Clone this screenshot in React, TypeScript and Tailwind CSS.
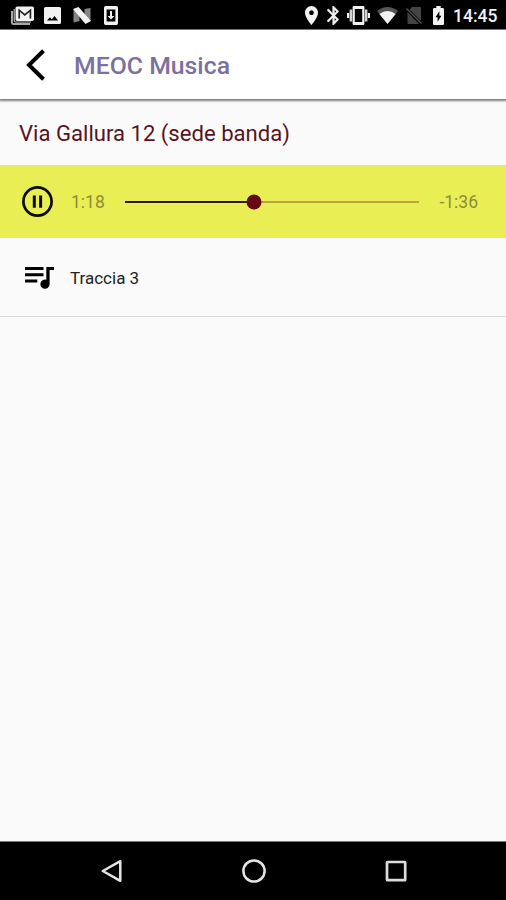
import type { ReactNode } from "react";

const elapsed = 78;
const remaining = 96;

const tracks = [{ id: 3, name: "Traccia 3" }];

function formatTime(seconds: number) {
  return `${Math.floor(seconds / 60)}:${String(seconds % 60).padStart(2, "0")}`;
}

function StatusIcon({
  className,
  viewBox,
  children,
}: {
  className: string;
  viewBox: string;
  children: ReactNode;
}) {
  return (
    <svg
      className={`shrink-0 ${className}`}
      viewBox={viewBox}
      preserveAspectRatio="none"
      fill="currentColor"
    >
      {children}
    </svg>
  );
}

function StatusBar() {
  return (
    <div className="flex h-[30px] shrink-0 items-center justify-between border-b border-[#8f8b8b] bg-black pr-[9px] pl-[11px] text-[#f2f2f2]">
      <div className="flex items-center pt-px">
        <StatusIcon className="h-[19px] w-[23px]" viewBox="0 0 23 19">
          <path d="M1 5v11.5Q1 18 2.5 18H19" fill="none" stroke="#a8a8a8" strokeWidth="2" />
          <path d="M3.2 3v11.5Q3.2 16 4.7 16H20" fill="none" stroke="#bdbdbd" strokeWidth="1.2" />
          <rect x="4.5" y="0.5" width="18.5" height="14.5" rx="1.8" />
          <path d="M8.2 12.5V4.2l5.6 4.6 5.6-4.6v8.3" fill="none" stroke="#222" strokeWidth="1.7" />
        </StatusIcon>
        <StatusIcon className="ml-[10px] h-[17px] w-[17px]" viewBox="0 0 17 17">
          <path
            fillRule="evenodd"
            d="M1.5 0h14Q17 0 17 1.5v14q0 1.5-1.5 1.5h-14Q0 17 0 15.5v-14Q0 0 1.5 0zM3 13.5h11l-3.4-4.6-2.8 3.3-1.9-2z"
          />
        </StatusIcon>
        <StatusIcon className="ml-3 h-[17px] w-[18px]" viewBox="0 0 18 17">
          <path d="M.5 2.5l6 3V14l-6 1.5zM17.5 1v13l-6-3V2z" fill="#858585" />
          <path d="M0 2L5.5 0 18 14l-5.5 3z" />
        </StatusIcon>
        <StatusIcon className="ml-[13px] h-[19px] w-[14px]" viewBox="0 0 14 19">
          <path
            fillRule="evenodd"
            d="M1.7 0h10.6Q14 0 14 1.7v15.6q0 1.7-1.7 1.7H1.7Q0 19 0 17.3V1.7Q0 0 1.7 0zM2.6 3.5v12h8.8v-12z"
          />
          <path d="M6 5h2v5h2.4L7 13.6 3.6 10H6z" />
        </StatusIcon>
      </div>
      <div className="flex items-center pt-px">
        <StatusIcon className="h-[19px] w-[13px]" viewBox="5 2 14 20">
          <path d="M12 2C8.13 2 5 5.13 5 9c0 5.25 7 13 7 13s7-7.75 7-13c0-3.87-3.13-7-7-7zm0 9.5c-1.38 0-2.5-1.12-2.5-2.5s1.12-2.5 2.5-2.5 2.5 1.12 2.5 2.5-1.12 2.5-2.5 2.5z" />
        </StatusIcon>
        <StatusIcon className="ml-[9px] h-[19px] w-3" viewBox="5 2 12.8 20">
          <path
            d="M17.71 7.71L12 2h-1v7.59L6.41 5 5 6.41 10.59 12 5 17.59 6.41 19 11 14.41V22h1l5.71-5.71-4.3-4.29 4.3-4.29zM13 5.83l1.88 1.88L13 9.59V5.83zm1.88 10.46L13 18.17v-3.76l1.88 1.88z"
            stroke="currentColor"
            strokeWidth="0.4"
          />
        </StatusIcon>
        <StatusIcon className="ml-2 h-[19px] w-[23px]" viewBox="0 0 23 19">
          <path d="M0 7h2.2v5H0zM20.8 7H23v5h-2.2z" />
          <path d="M2.6 3.5h2.6v12H2.6zM17.8 3.5h2.6v12h-2.6z" fill="#d2d2d2" />
          <path
            fillRule="evenodd"
            d="M6.8 0h9.4q1.2 0 1.2 1.2v16.6q0 1.2-1.2 1.2H6.8q-1.2 0-1.2-1.2V1.2Q5.6 0 6.8 0zM7.8 3v13h7.4V3z"
          />
        </StatusIcon>
        <StatusIcon className="ml-[7px] h-[17px] w-[21px]" viewBox="0 0 21 17">
          <path d="M10.5 17L0 4Q10.5-4 21 4z" fill="#555" />
          <path d="M10.5 17L2.4 7Q10.5 1.2 18.6 7z" />
        </StatusIcon>
        <StatusIcon className="ml-2 h-[17px] w-4" viewBox="0 0 16 17">
          <path d="M6 0h8q1 0 1 1v13L3.5 2.5zM1.5 5L13 17H2.5q-1 0-1-1z" fill="#444" />
          <path d="M.5 1.5l15 15" stroke="#555" strokeWidth="1.3" />
        </StatusIcon>
        <StatusIcon className="ml-[11px] h-[19px] w-[11px]" viewBox="7 2 10 20">
          <path d="M15.67 4H14V2h-4v2H8.33C7.6 4 7 4.6 7 5.33v15.33C7 21.4 7.6 22 8.33 22h7.33c.74 0 1.34-.6 1.34-1.33V5.33C17 4.6 16.4 4 15.67 4zM11.2 18.5v-4.7H9.3l3.5-6.3v4.7h1.9l-3.5 6.3z" />
        </StatusIcon>
        <span className="ml-[9px] w-[44px] pt-[3px] text-[17.5px] leading-none font-medium whitespace-nowrap">
          14:45
        </span>
      </div>
    </div>
  );
}

function Header() {
  return (
    <header className="z-10 flex h-[69px] shrink-0 items-center bg-white pl-[25px] shadow-[0_1px_2px_1px_rgba(0,0,0,0.5)]">
      <svg className="h-8 w-5 shrink-0" viewBox="0 0 20 32" fill="none">
        <path d="M18.5 1.8L4 16l14.5 14.2" stroke="#000" strokeWidth="4" />
      </svg>
      <h1 className="pt-[3px] pl-[29px] text-[24.8px] leading-none font-medium text-[#7c70a0]">
        MEOC Musica
      </h1>
    </header>
  );
}

function Player() {
  const progress = 100 * (elapsed / (elapsed + remaining)) - 0.9;

  return (
    <div className="flex h-[73px] shrink-0 items-center bg-[#eaee55] pr-7 pl-[22px] text-[17.5px] text-[#8c8d36]">
      <svg className="h-[31px] w-[31px] shrink-0" viewBox="0 0 31 31" fill="none">
        <circle cx="15.5" cy="15.5" r="14.1" stroke="#0c0c04" strokeWidth="2.7" />
        <path d="M12.3 9.5v12.2M18.6 9.5v12.2" stroke="#0c0c04" strokeWidth="3" />
      </svg>
      <span className="w-[72px] pt-[3px] pl-[18px] leading-none">
        {formatTime(elapsed)}
      </span>
      <div className="relative h-0.5 flex-1 bg-[#bfa33a]">
        <div className="h-full bg-[#2d1707]" style={{ width: `${progress}%` }} />
        <div
          className="absolute top-1/2 size-[15px] -translate-1/2 rounded-full bg-[#670914]"
          style={{ left: `${progress}%` }}
        />
      </div>
      <span className="w-[59px] pt-[3px] text-right leading-none">
        -{formatTime(remaining)}
      </span>
    </div>
  );
}

function NavigationBar() {
  return (
    <nav className="flex h-[59px] shrink-0 items-center justify-between border-t border-[#777] bg-black pr-[99px] pl-[100px]">
      <svg className="h-6 w-[22px]" viewBox="0 0 22 24" fill="none" stroke="#e4e4e4" strokeWidth="2.5">
        <path d="M20.3 2.2v19.6L2.8 12z" strokeLinejoin="round" />
      </svg>
      <svg className="size-6" viewBox="0 0 24 24" fill="none" stroke="#e4e4e4" strokeWidth="2.5">
        <circle cx="12" cy="12" r="10.6" />
      </svg>
      <svg className="size-[22px]" viewBox="0 0 22 22" fill="none" stroke="#dcdcdc" strokeWidth="2.7">
        <rect x="2" y="2" width="18.2" height="18.2" rx="0.5" />
      </svg>
    </nav>
  );
}

export default function App() {
  return (
    <div className="flex h-[900px] w-[506px] flex-col overflow-hidden bg-[#fafafa] font-[Roboto,sans-serif]">
      <StatusBar />
      <Header />
      <h2 className="flex h-[66px] shrink-0 items-center pt-[3px] pl-[19px] text-[22.1px] leading-none text-[#58141e]">
        Via Gallura 12 (sede banda)
      </h2>
      <Player />
      <ul className="flex-1">
        {tracks.map((track) => (
          <li
            key={track.id}
            className="flex h-[79px] items-center border-b border-[#d8d8d8] pl-[25px] text-[17px] text-[#222]"
          >
            <svg className="mt-px h-[22px] w-[30px] shrink-0" viewBox="0 0 30 22" fill="#000">
              <path d="M0 0h18.5v3H0zM0 6.2h18.5v3H0zM0 12.6h12.3v3H0z" />
              <path d="M21.3 0H29v3h-4.4v14.2a4.6 4.6 0 1 1-3.3-4.4z" />
            </svg>
            <span className="pt-[3px] pl-[15px] leading-none">{track.name}</span>
          </li>
        ))}
      </ul>
      <NavigationBar />
    </div>
  );
}
